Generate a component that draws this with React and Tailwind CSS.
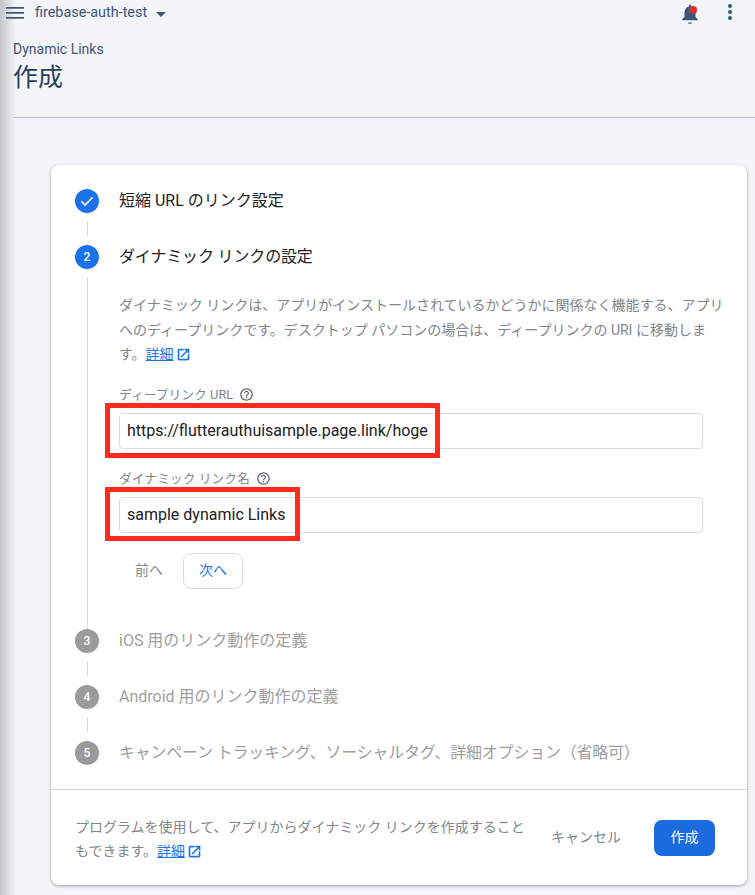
import React from "react";

function Ext() {
  return (
    <svg viewBox="0 0 24 24" className="w-[15px] h-[15px] fill-[#1a73e8] stroke-[#1a73e8] stroke-[0.6] inline-block ml-[2px] align-[-3px]">
      <path d="M19 19H5V5h7V3H5a2 2 0 0 0-2 2v14a2 2 0 0 0 2 2h14a2 2 0 0 0 2-2v-7h-2v7zM14 3v2h3.590l-9.830 9.830 1.410 1.410L19 6.410V10h2V3h-7z" />
    </svg>
  );
}

function Help() {
  return (
    <svg viewBox="0 0 24 24" className="w-[15px] h-[15px] fill-[#5f6368] ml-[6px]">
      <path d="M11 18h2v-2h-2v2zm1-16C6.480 2 2 6.480 2 12s4.480 10 10 10 10-4.480 10-10S17.520 2 12 2zm0 18c-4.410 0-8-3.590-8-8s3.590-8 8-8 8 3.590 8 8-3.590 8-8 8zm0-14c-2.210 0-4 1.790-4 4h2c0-1.100.9-2 2-2s2 .9 2 2c0 2-3 1.750-3 5h2c0-2.250 3-2.500 3-5 0-2.210-1.790-4-4-4z" />
    </svg>
  );
}

function Step({ n, label, active, done, labelClass = "" }) {
  return (
    <div className="flex items-center h-6">
      <div className={`w-6 h-6 rounded-full flex items-center justify-center text-white text-[12px] font-medium ${active || done ? "bg-[#1a73e8]" : "bg-[#9a9a9a]"}`}>
        {done ? (
          <svg viewBox="0 0 24 24" className="w-[18px] h-[18px] fill-none stroke-white stroke-[2.2]">
            <path d="M4.500 12.500l5 5 10-10.500" />
          </svg>
        ) : n}
      </div>
      <div className={`ml-5 text-[16px] whitespace-nowrap ${active || done ? "text-[#202124]" : "text-[#9e9e9e]"} ${labelClass}`}>{label}</div>
    </div>
  );
}

function Connector() {
  return <div className="ml-3 w-px h-4 my-2 bg-[#dadce0]" />;
}

function Field({ label, value, mt, box }) {
  return (
    <div className={mt}>
      <div className="flex items-center h-[18px] text-[12.800px] leading-[18px] text-[#80868b]">
        {label}
        <Help />
      </div>
      <div className="relative mt-[9px]">
        <div className="h-9 border border-[#dadce0] rounded-[4px] pl-[7px] flex items-center text-[16px] text-[#202124] bg-white whitespace-nowrap">
          {value}
        </div>
        <div className={`absolute border-[5px] border-[#ff2a1c] ${box}`} />
      </div>
    </div>
  );
}

export default function App() {
  return (
    <div className="relative w-[755px] h-[895px] overflow-hidden bg-[#f4f5f8] font-[Roboto,'Noto_Sans_CJK_JP',sans-serif]">
      <div className="absolute left-0 top-0 bottom-0 w-[16px] bg-gradient-to-r from-[#c4c4c6] to-[#f4f5f8]" />

      <div className="relative h-[28px] flex items-center pl-[6px] pr-[23px] text-[#3c5478]">
        <svg viewBox="0 0 18 12" className="w-[18px] h-[12px] fill-[#3c5478] -mt-[2px]">
          <rect y="0" width="18" height="1.700" />
          <rect y="5" width="18" height="1.700" />
          <rect y="10" width="18" height="1.700" />
        </svg>
        <span className="ml-[11px] text-[14.400px] leading-none -mt-[2px]">firebase-auth-test</span>
        <svg viewBox="0 0 10 5" className="ml-[9px] w-[10px] h-[5px] fill-[#3c5478]">
          <path d="M0 0h10L5 5z" />
        </svg>
        <div className="ml-auto flex items-center">
          <div className="relative w-4 h-[20px] mr-[30px] -mt-[1px]">
            <svg viewBox="0 0 16 20" className="w-4 h-[20px] fill-[#3c5478]">
              <path d="M8 0.500c.6 0 1 .5 1 1v1c3 .7 4.500 3.200 4.500 6.200v4.300l2.200 2.200v1H.3v-1L2.500 13V8.700c0-3 1.500-5.500 4.500-6.200v-1c0-.5.400-1 1-1zM6 18.500h4c0 .800-.9 1.300-2 1.300s-2-.5-2-1.300z" />
            </svg>
            <div className="absolute w-2 h-2 rounded-full bg-[#d32f2f] left-[7px] top-[2px]" />
          </div>
          <svg viewBox="0 0 4 18" className="w-1 h-[18px] fill-[#3c5478] -mt-[2px]">
            <circle cx="2" cy="2" r="2" />
            <circle cx="2" cy="8" r="2" />
            <circle cx="2" cy="14" r="2" />
          </svg>
        </div>
      </div>

      <div className="relative ml-[13px] mt-[12px] text-[14px] leading-[18px] text-[#3c5478]">Dynamic Links</div>
      <div className="relative ml-[13px] mt-[2px] text-[25px] leading-[36px] text-[#2c405c]">作成</div>
      <div className="relative ml-[13px] mt-[21px] h-px bg-[#b9c5d4]" />

      <div className="relative ml-[51px] mt-[47px] w-[696px] h-[720px] bg-white rounded-[8px] shadow-[0_1px_3px_rgba(60,64,67,0.5)] flex flex-col">
        <div className="pt-6 pl-6">
          <Step done label="短縮 URL のリンク設定" />
          <Connector />
          <Step n="2" active label="ダイナミック リンクの設定" labelClass="tracking-[-0.150px]" />
          <div className="ml-3 mt-2 border-l border-[#dadce0] h-[352px] pl-[31px] pr-[20px] pt-[16px]">
            <p className="text-[14px] leading-[24.500px] text-[#80868b] w-[606px]">
              ダイナミック リンクは、アプリがインストールされているかどうかに関係なく機能する、アプリへのディープリンクです。デスクトップ パソコンの場合は、ディープリンクの URI に移動します。
              <span className="text-[#1a73e8] underline">詳細</span>
              <Ext />
            </p>
            <div className="w-[584px]">
              <Field mt="mt-[19px]" label="ディープリンク URL" value="https://flutterauthuisample.page.link/hoge" box="-left-[14px] -top-[10px] w-[335px] h-[55px]" />
              <Field mt="mt-[21px]" label="ダイナミック リンク名" value="sample dynamic Links" box="-left-[14px] -top-[10px] w-[195px] h-[54px]" />
            </div>
            <div className="flex items-center mt-[20px]">
              <div className="w-[60px] text-center text-[14px] text-[#80868b]">前へ</div>
              <div className="ml-[4px] w-[60px] h-9 border border-[#dadce0] rounded-[8px] flex items-center justify-center text-[14px] text-[#1a73e8]">次へ</div>
            </div>
          </div>
          <Step n="3" label="iOS 用のリンク動作の定義" />
          <Connector />
          <Step n="4" label="Android 用のリンク動作の定義" />
          <Connector />
          <Step n="5" label="キャンペーン トラッキング、ソーシャルタグ、詳細オプション（省略可）" labelClass="tracking-[-0.220px]" />
        </div>
        <div className="mt-6 border-t border-[#dadce0] flex-1 flex items-center pl-6 pr-8">
          <p className="w-[452px] text-[14px] leading-[24px] text-[#80868b] mt-[2px]">
            プログラムを使用して、アプリからダイナミック リンクを作成することもできます。
            <span className="text-[#1a73e8] underline">詳細</span>
            <Ext />
          </p>
          <div className="ml-auto text-[14px] text-[#80868b]">キャンセル</div>
          <div className="ml-[33px] w-[61px] h-9 rounded-[8px] bg-[#1a6ae0] text-white text-[14px] flex items-center justify-center">作成</div>
        </div>
      </div>
    </div>
  );
}
